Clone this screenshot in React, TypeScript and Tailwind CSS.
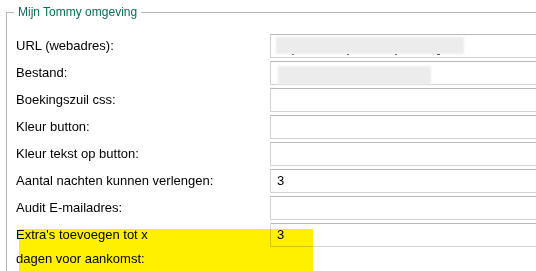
import React from 'react';

const FIELDS = [
  { label: 'URL (webadres):', value: '', blur: 'url' },
  { label: 'Bestand:', value: '', blur: 'file' },
  { label: 'Boekingszuil css:', value: '' },
  { label: 'Kleur button:', value: '' },
  { label: 'Kleur tekst op button:', value: '' },
  { label: 'Aantal nachten kunnen verlengen:', value: '3' },
  { label: 'Audit E-mailadres:', value: '' },
];

const Field = ({ value, blur }: { value: string; blur?: string }) => (
  <div className="relative h-[24px]">
    <input
      readOnly
      value={value}
      className="w-full h-[24px] border border-[#d3d3d3] border-t-[#b9b9b9] bg-white px-[6px] text-[13px] text-black outline-none"
    />
    {blur === 'url' && (
      <>
        <div className="absolute left-[6px] top-[3px] w-[188px] h-[17px] bg-[#ececec] blur-[1px]" />
        <div className="absolute left-[22px] top-[20px] w-[2px] h-[1px] bg-[#777]" />
        <div className="absolute left-[77px] top-[20px] w-[2px] h-[1px] bg-[#777]" />
        <div className="absolute left-[125px] top-[20px] w-[2px] h-[1px] bg-[#777]" />
        <div className="absolute left-[167px] top-[20px] w-[3px] h-[1px] bg-[#555]" />
      </>
    )}
    {blur === 'file' && (
      <div className="absolute left-[8px] top-[5px] w-[153px] h-[19px] bg-[#ececec] blur-[1px]" />
    )}
  </div>
);

export default function App() {
  return (
    <div
      className="relative w-[536px] h-[271px] overflow-hidden bg-white text-black"
      style={{ fontFamily: '"Liberation Sans", Arial, sans-serif' }}
    >
      <fieldset className="ml-[6px] mt-[5px] w-[600px] border border-[#b5b7c9] pl-[9px] pb-4">
        <legend className="-ml-[2px] px-[4px] text-[12px] leading-[14px] text-[#0b6b5b]">
          Mijn Tommy omgeving
        </legend>
        <div className="pt-[15px] grid grid-cols-[254px_1fr] gap-y-[3px] text-[13px] leading-[24px]">
          {FIELDS.map((f) => (
            <React.Fragment key={f.label}>
              <div className="self-center">{f.label}</div>
              <Field value={f.value} blur={f.blur} />
            </React.Fragment>
          ))}
          <div>
            Extra's toevoegen tot x
            <br />
            dagen voor aankomst:
          </div>
          <Field value="3" />
        </div>
      </fieldset>

      {/* highlight marker */}
      <div className="absolute left-[19px] top-[229px] w-[294px] h-[50px] bg-[#fff000] mix-blend-multiply pointer-events-none" />
    </div>
  );
}
